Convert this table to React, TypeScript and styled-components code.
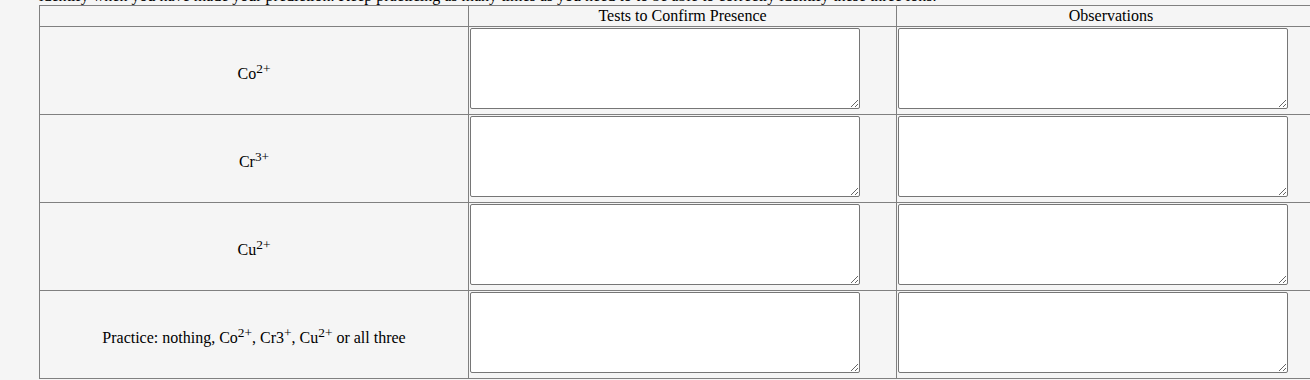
import * as React from 'react';
import styled, { createGlobalStyle } from 'styled-components';

const GlobalStyle = createGlobalStyle`
  body {
    margin: 0;
    background: #f5f5f5;
    font-family: 'Liberation Serif', 'Times New Roman', serif;
    font-size: 16px;
    color: #000;
    overflow: hidden;
  }
`;

const ions = [
  { symbol: 'Co', charge: '2+' },
  { symbol: 'Cr', charge: '3+' },
  { symbol: 'Cu', charge: '2+' },
];

const App: React.FC = () => {
  return (
    <Page>
      <GlobalStyle />
      <Intro>
        identify when you have made your prediction. Keep practicing as many times as you need to to be able to
        correctly identify these three ions.
      </Intro>
      <IonTable>
        <colgroup>
          <col style={{ width: 429 }} />
          <col style={{ width: 428 }} />
          <col style={{ width: 429 }} />
        </colgroup>
        <tbody>
          <tr>
            <HeadCell />
            <HeadCell>Tests to Confirm Presence</HeadCell>
            <HeadCell>Observations</HeadCell>
          </tr>
          {ions.map((ion) => (
            <tr key={ion.symbol}>
              <LabelCell>
                {ion.symbol}
                <sup>{ion.charge}</sup>
              </LabelCell>
              <InputCell>
                <Answer />
              </InputCell>
              <InputCell>
                <Answer />
              </InputCell>
            </tr>
          ))}
          <tr>
            <LabelCell>
              Practice: nothing, Co<sup>2+</sup>, Cr3<sup>+</sup>, Cu<sup>2+</sup> or all three
            </LabelCell>
            <InputCell>
              <Answer />
            </InputCell>
            <InputCell>
              <Answer />
            </InputCell>
          </tr>
        </tbody>
      </IonTable>
    </Page>
  );
};

export default App;

const Page = styled.div`
  padding-left: 39px;
`;

const Intro = styled.p`
  margin: -13px 0 0;
  line-height: 18px;
  white-space: nowrap;
`;

const IonTable = styled.table`
  border-collapse: collapse;
  table-layout: fixed;
  width: 1286px;
  border: 1px solid #808080;
`;

const HeadCell = styled.td`
  border: 1px solid #808080;
  padding: 1px;
  height: 18px;
  text-align: center;
  vertical-align: middle;
  line-height: 18px;
`;

const LabelCell = styled.td`
  border: 1px solid #808080;
  padding: 3px 1px 0;
  text-align: center;
  vertical-align: middle;
`;

const InputCell = styled.td`
  border: 1px solid #808080;
  padding: 1px;
  vertical-align: top;
  line-height: 18px;
`;

const Answer = styled.textarea`
  box-sizing: border-box;
  width: 390px;
  height: 81px;
  margin: 0 0 4px;
  padding: 2px;
  border: 1px solid #767676;
  border-radius: 2px;
  background: #fff;
  font: inherit;
  vertical-align: top;
`;
